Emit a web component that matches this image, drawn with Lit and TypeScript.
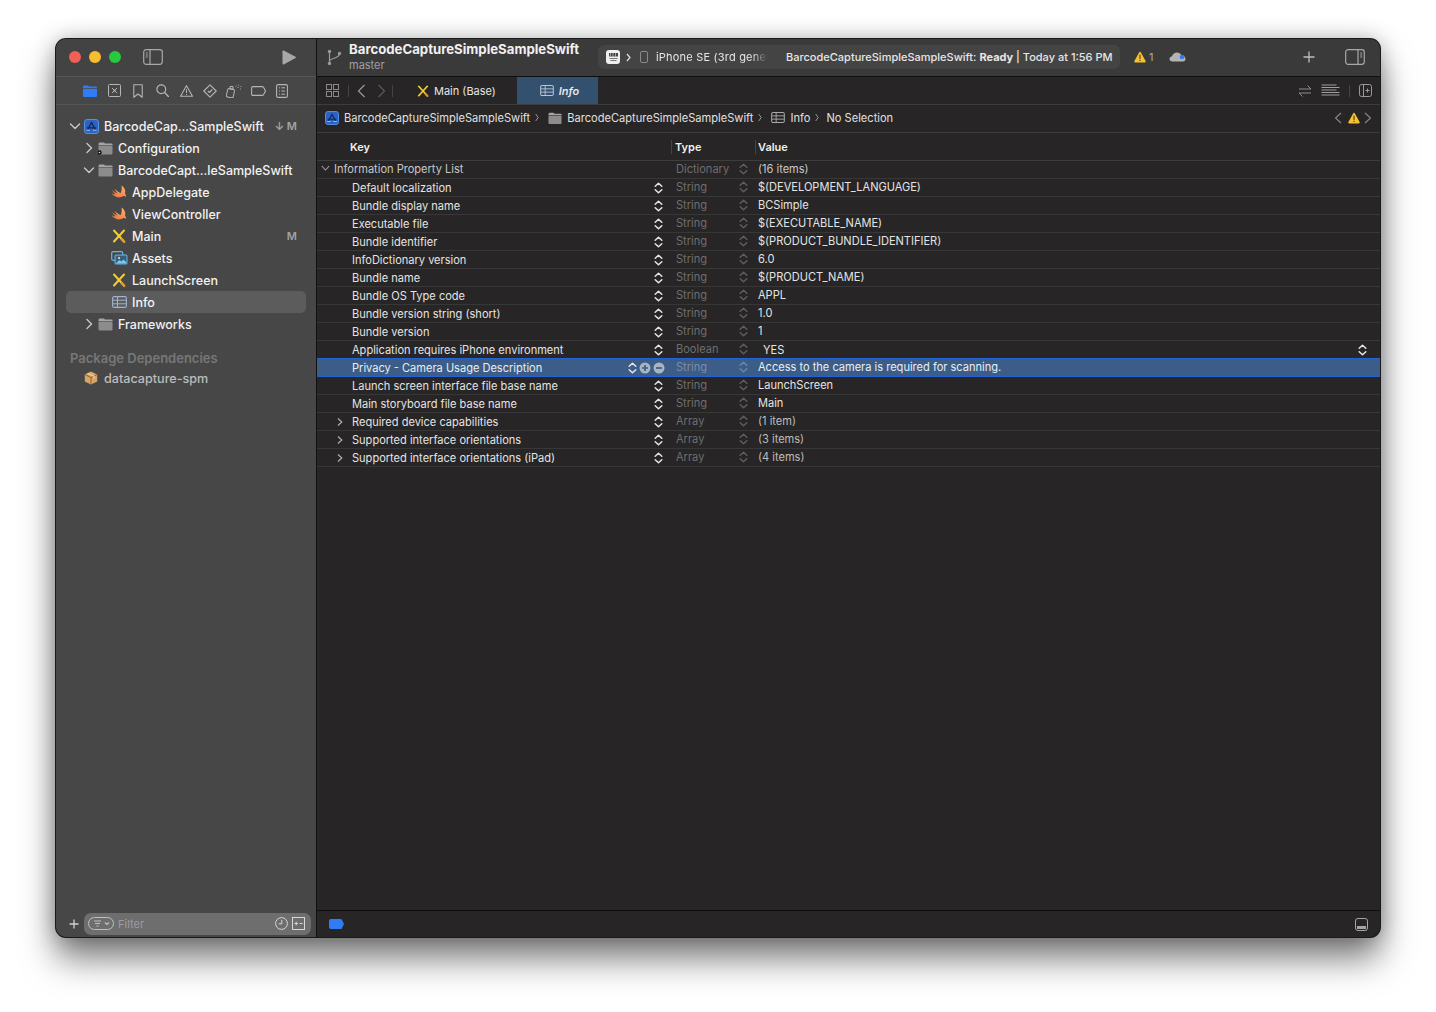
import { LitElement, html, css, svg } from "lit";
import { customElement } from "lit/decorators.js";

const ic = (w: number, h: number, body: unknown, cls = "") =>
  html`<svg class="ic ${cls}" width=${w} height=${h} viewBox="0 0 ${w} ${h}" fill="none">${body}</svg>`;

const chevR = (c = "#c8c8c8") => ic(8, 12, svg`<path d="M2 1.500 6.500 6 2 10.500" stroke=${c} stroke-width="1.400" stroke-linecap="round" stroke-linejoin="round"/>`);
const chevD = (c = "#c8c8c8") => ic(12, 8, svg`<path d="M1.500 2 6 6.500 10.500 2" stroke=${c} stroke-width="1.400" stroke-linecap="round" stroke-linejoin="round"/>`);

const folder = (badge = false, w = 15) => html`<svg class="ic" width=${w} height="14" viewBox="0 0 15 14" fill="none">
  <path d="M.5 3.500C.5 2 1 1.500 2.200 1.500h3.200c.8 0 1 .3 1.500 1h6.400c1 0 1.400.5 1.400 1.400V4H.5z" fill="#a5a5a5"/>
  <path d="M.5 4.500h14v7.500c0 1-.5 1.500-1.500 1.500H2c-1 0-1.500-.5-1.500-1.500z" fill="#8c8c8c"/>
  ${badge ? svg`<circle cx="1.500" cy="11.500" r="2.200" fill="#111"/><circle cx="1.500" cy="11.500" r=".8" fill="#ddd"/>` : ""}
</svg>`;

const project = (s = 15) => html`<svg class="ic" width=${s} height=${s} viewBox="0 0 16 16" fill="none">
  <rect x=".6" y=".6" width="14.800" height="14.800" rx="2.600" fill="#2b62c4" stroke="#5b97ef"/>
  <path d="M8 3.600 4.200 11M8 3.600 11.800 11M3.600 9.400h8.800" stroke="#12294f" stroke-width="1.300" stroke-linecap="round"/>
  <path d="M3 12h3M10 12h3" stroke="#9cc3f7" stroke-width="1.100" stroke-linecap="round"/>
</svg>`;

const swift = () => html`<svg class="ic" width="16" height="14" viewBox="0 0 16 14">
  <defs><linearGradient id="sw" x1="0.7" y1="0" x2="0.3" y2="1"><stop offset="0" stop-color="#fbb26a"/><stop offset="1" stop-color="#f27a42"/></linearGradient></defs>
  <path fill="url(#sw)" d="M10.500 .5C13.500 2.500 15 5.500 14 8.500C14.800 9.600 15.200 10.800 15 12.200C14.200 11 13 10.700 12 11.300C10.300 12.400 7.800 12.800 5.500 12C3.500 11.300 1.800 10 .6 8.300C2 9.100 3.400 9.500 4.900 9.500C3.400 8.400 2 6.900 1 5C2.800 6.600 4.800 7.900 6.600 8.700C5.400 7.300 4.200 5.600 3.400 3.800C5.300 5.600 7.500 7.200 9.600 8.200C10.700 5.800 11.100 3 10.500 .5z"/>
</svg>`;

const xib = (s = 14) => html`<svg class="ic" width=${s} height=${s} viewBox="0 0 14 14" fill="none">
  <path d="M2 1.500 12 12.500" stroke="#f4cf2e" stroke-width="2" stroke-linecap="round"/>
  <path d="M12 1.500 2 12.500" stroke="#f4cf2e" stroke-width="2" stroke-linecap="round"/>
  <path d="M9.500 10 12.300 13" stroke="#e9962f" stroke-width="2.200" stroke-linecap="round"/>
</svg>`;

const plist = (c = "#9fb4c9", w = 15, h = 12) => html`<svg class="ic" width=${w} height=${h} viewBox="0 0 15 12" fill="none">
  <rect x=".6" y=".6" width="13.800" height="10.800" rx="1.500" stroke=${c} stroke-width="1.100"/>
  <path d="M.6 4.200h13.800M.6 7.800h13.800M5.500 .6v10.800" stroke=${c} stroke-width="1"/>
</svg>`;

const assets = () => ic(17, 14, svg`
  <rect x=".7" y=".7" width="11" height="8.600" rx="1.500" stroke="#66b6ea" stroke-width="1.200"/>
  <rect x="3.500" y="3.500" width="13" height="10" rx="1.500" fill="#5fb0e6"/>
  <rect x="4.600" y="4.600" width="10.800" height="7.800" fill="#3c5d74"/>
  <path d="M4.600 12.400 8.500 9l2 1.500 2-2 2.900 3v.9z" fill="#78c8f4"/>
  <circle cx="8" cy="7" r="1" fill="#d8eeff"/>
`);

const box = () => ic(14, 14, svg`
  <path d="M7 .5 13.200 3.500v7L7 13.500.8 10.500v-7z" fill="#d9a566"/>
  <path d="M.8 3.500 7 6.500l6.200-3M7 6.500v7" stroke="#8f6537" stroke-width="1"/>
  <path d="M3.600 2.200 10 5.200v2" stroke="#f0d0a4" stroke-width="1.200"/>
`);

const warn = (s = 12) => html`<svg class="ic" width=${s} height=${s} viewBox="0 0 12 12">
  <path d="M6 .8c.4 0 .7.2.9.6l4.700 8.700c.3.600-.1 1.300-.8 1.300H1.200c-.7 0-1.100-.7-.8-1.300L5.100 1.400c.2-.4.5-.6.9-.6z" fill="#f7c033"/>
  <rect x="5.400" y="3.600" width="1.200" height="4.400" fill="#5e4a12"/>
  <rect x="5.400" y="8.800" width="1.200" height="1.200" fill="#5e4a12"/>
</svg>`;

const stepper = (c = "#e6e6e6") => html`<svg class="ic" width="9" height="12" viewBox="0 0 9 12" fill="none">
  <path d="M1.200 4.300 4.500 1.200 7.800 4.300M1.200 7.700 4.500 10.800 7.800 7.700" stroke=${c} stroke-width="1.500" stroke-linecap="round" stroke-linejoin="round"/>
</svg>`;

const S = "#b5b5b5";
const navIcons = [
  html`<svg class="ic" width="14" height="12" viewBox="0 0 14 12"><path d="M0 2c0-1 .5-1.500 1.500-1.500h3c.8 0 1 .4 1.400 1h6.600c1 0 1.500.5 1.500 1.500H0z" fill="#2f7cf6"/><path d="M0 3.800h14v6.700c0 1-.5 1.500-1.500 1.500h-11c-1 0-1.500-.5-1.500-1.500z" fill="#2f7cf6"/></svg>`,
  ic(13, 13, svg`<rect x=".5" y=".5" width="12" height="12" rx="1" stroke=${S}/><path d="M4 4l5 5M9 4l-5 5" stroke=${S}/><circle cx="6.500" cy="6.500" r="1" fill=${S}/>`),
  ic(10, 14, svg`<path d="M.8 .7h8.400v12.600L5 10 .8 13.300z" stroke=${S} stroke-width="1.100" stroke-linejoin="round"/>`),
  ic(13, 13, svg`<circle cx="5.300" cy="5.300" r="4.400" stroke=${S} stroke-width="1.200"/><path d="M8.600 8.600 12.400 12.400" stroke=${S} stroke-width="1.400" stroke-linecap="round"/>`),
  ic(13, 12, svg`<path d="M6.500 .8 12.500 11.300H.5z" stroke=${S} stroke-width="1.100" stroke-linejoin="round"/><path d="M6.500 4.300V8M6.500 9v1" stroke=${S}/>`),
  ic(14, 14, svg`<path d="M7 .8 13.200 7 7 13.200.8 7z" stroke=${S} stroke-width="1.100" stroke-linejoin="round"/><path d="M4.800 7 6.500 8.500 9.300 5.500" stroke=${S} stroke-width="1.100"/>`),
  ic(16, 14, svg`<rect x="1" y="5" width="7" height="8.500" rx="1.500" stroke=${S} transform="rotate(12 4.500 9)"/><path d="M4 2.500h3v2.500H4z" stroke=${S}/><circle cx="10" cy="2" r=".6" fill=${S}/><circle cx="12.500" cy="1" r=".6" fill=${S}/><circle cx="12" cy="3.500" r=".6" fill=${S}/><circle cx="15" cy="2.500" r=".6" fill=${S}/><circle cx="14.500" cy="5" r=".6" fill=${S}/>`),
  ic(15, 10, svg`<path d="M2 .6h9.300c.5 0 .8.200 1.100.5L14.500 5l-2.100 3.900c-.3.300-.6.500-1.100.5H2c-.8 0-1.400-.6-1.400-1.400V2C.6 1.200 1.200.6 2 .6z" stroke=${S} stroke-width="1.100"/>`),
  ic(12, 14, svg`<rect x=".6" y=".6" width="10.800" height="12.800" rx="1.500" stroke=${S} stroke-width="1.100"/><path d="M3 3.800h1M5.300 3.800H9M3 7h1M5.300 7H9M3 10.200h1M5.300 10.200H9" stroke=${S}/>`),
];

type Tree = { indent: number; tog?: "r" | "d"; icon: unknown; label: string; status?: string; sel?: boolean };
const tree: Tree[] = [
  { indent: 14, tog: "d", icon: project(), label: "BarcodeCap...SampleSwift", status: "↓ M" },
  { indent: 28, tog: "r", icon: folder(true), label: "Configuration" },
  { indent: 28, tog: "d", icon: folder(), label: "BarcodeCapt...leSampleSwift" },
  { indent: 42, icon: swift(), label: "AppDelegate" },
  { indent: 42, icon: swift(), label: "ViewController" },
  { indent: 42, icon: xib(), label: "Main", status: "M" },
  { indent: 42, icon: assets(), label: "Assets" },
  { indent: 42, icon: xib(), label: "LaunchScreen" },
  { indent: 42, icon: plist(), label: "Info", sel: true },
  { indent: 28, tog: "r", icon: folder(), label: "Frameworks" },
];

type Row = { k: string; t: string; v: string; tog?: boolean; sel?: boolean; yes?: boolean };
const rows: Row[] = [
  { k: "Default localization", t: "String", v: "$(DEVELOPMENT_LANGUAGE)" },
  { k: "Bundle display name", t: "String", v: "BCSimple" },
  { k: "Executable file", t: "String", v: "$(EXECUTABLE_NAME)" },
  { k: "Bundle identifier", t: "String", v: "$(PRODUCT_BUNDLE_IDENTIFIER)" },
  { k: "InfoDictionary version", t: "String", v: "6.0" },
  { k: "Bundle name", t: "String", v: "$(PRODUCT_NAME)" },
  { k: "Bundle OS Type code", t: "String", v: "APPL" },
  { k: "Bundle version string (short)", t: "String", v: "1.0" },
  { k: "Bundle version", t: "String", v: "1" },
  { k: "Application requires iPhone environment", t: "Boolean", v: "YES", yes: true },
  { k: "Privacy - Camera Usage Description", t: "String", v: "Access to the camera is required for scanning.", sel: true },
  { k: "Launch screen interface file base name", t: "String", v: "LaunchScreen" },
  { k: "Main storyboard file base name", t: "String", v: "Main" },
  { k: "Required device capabilities", t: "Array", v: "(1 item)", tog: true },
  { k: "Supported interface orientations", t: "Array", v: "(3 items)", tog: true },
  { k: "Supported interface orientations (iPad)", t: "Array", v: "(4 items)", tog: true },
];

const roundBtn = (minus: boolean) => html`<svg class="ic" width="12" height="12" viewBox="0 0 12 12">
  <circle cx="6" cy="6" r="5.500" fill="#a9b4c2"/>
  <path d=${minus ? "M3 6h6" : "M3 6h6M6 3v6"} stroke="#3b5d87" stroke-width="1.700"/>
</svg>`;

const gtIcon = () => ic(4, 9, svg`<path d="M.7 1l2.500 3.500L.7 8" stroke="#9a9a9a"/>`);

@customElement("app-root")
export class AppRoot extends LitElement {
  static styles = css`
    :host { display: block; box-sizing: border-box; width: 1436px; height: 1012px; padding: 39px 56px 75px; background: #fff; font-family: Inter, "Liberation Sans", sans-serif; overflow: hidden; }
    * { box-sizing: border-box; }
    .ic { display: block; flex: none; }
    .window { position: relative; display: flex; width: 1324px; height: 898px; border-radius: 10px; background: #272525; box-shadow: 0 0 0 1px #1a1a1a, 0 22px 34px rgba(0,0,0,.5), 0 0 22px rgba(0,0,0,.28); overflow: hidden; color: #e6e6e6; }
    .side { width: 261px; flex: none; display: flex; flex-direction: column; background: #474747; border-right: 1px solid #111; }
    .side-title { height: 38px; flex: none; display: flex; align-items: center; padding: 0 20px 1px 13px; background: #434343; border-bottom: 1px solid #555; }
    .light { width: 12px; height: 12px; border-radius: 50%; margin-right: 8px; }
    .r { background: #f15f57; } .y { background: #f8bd2f; } .g { background: #27c93f; }
    .side-toggle { margin-left: 14px; }
    .play { margin-left: auto; }
    .nav { height: 28px; flex: none; display: flex; align-items: center; gap: 10px; padding: 0 0 0 27px; border-bottom: 1px solid #555; }
    .nav > * { width: 14px; display: flex; justify-content: center; }
    .tree { flex: 1; padding-top: 10px; font-size: 12.5px; font-weight: 500; color: #f2f2f2; }
    .node { position: relative; height: 22px; display: flex; align-items: center; margin: 0 10px; border-radius: 5px; }
    .node.sel { background: #5c5c5c; }
    .tog { width: 14px; flex: none; display: flex; justify-content: center; margin-left: -3px; }
    .nicon { width: 18px; flex: none; display: flex; justify-content: center; margin-right: 4px; }
    .label { white-space: nowrap; }
    .status { margin-left: auto; padding-right: 9px; font-size: 11px; font-weight: 600; color: #a3a3a3; }
    .group { margin: 13px 0 0 14px; height: 20px; line-height: 20px; font-size: 13px; font-weight: 600; color: #777; }
    .dep { height: 20px; display: flex; align-items: center; gap: 6px; padding-left: 28px; font-size: 12.6px; color: #bdbdbd; }
    .filter-bar { height: 28px; flex: none; display: flex; align-items: center; padding: 1px 5px 0 13px; gap: 5px; }
    .field { flex: 1; height: 22px; display: flex; align-items: center; gap: 4px; padding: 0 6px 0 4px; background: #6e6e6e; border-radius: 7px; font-size: 11px; color: #9d9d9d; }
    .field .end { margin-left: auto; display: flex; gap: 4px; align-items: center; }
    .main { flex: 1; min-width: 0; display: flex; flex-direction: column; }
    .title { height: 38px; flex: none; display: flex; align-items: center; background: #3b3a3a; border-bottom: 1px solid #0e0e0e; padding: 0 15px 1px 10px; }
    .branch { margin-right: 7px; }
    .proj { width: 249px; flex: none; line-height: 1; }
    .proj b { display: block; font-size: 13.2px; font-weight: 700; color: #f0f0f0; white-space: nowrap; }
    .proj span { display: block; font-size: 11px; color: #a0a0a0; margin-top: 3px; }
    .activity { width: 522px; height: 24px; flex: none; display: flex; align-items: center; background: #454444; border-radius: 6px; padding-left: 8px; font-size: 11px; color: #e6e6e6; }
    .scheme { width: 14px; height: 14px; border-radius: 3px; background: #efefef; display: flex; align-items: center; justify-content: center; margin-right: 6px; }
    .device { margin: 0 8px 0 9px; }
    .dev-name { width: 114px; letter-spacing: .2px; white-space: nowrap; -webkit-mask-image: linear-gradient(90deg, #000 84%, transparent 98%); mask-image: linear-gradient(90deg, #000 84%, transparent 98%); }
    .status-text { margin-left: 16px; white-space: nowrap; font-weight: 500; }
    .status-text b { font-weight: 700; }
    .warnc { display: flex; align-items: center; gap: 3px; margin-left: 14px; font-size: 11px; color: #aaa; }
    .cloud { margin-left: 16px; }
    .title .add { margin-left: auto; margin-right: 30px; }
    .tabs { height: 28px; flex: none; display: flex; align-items: stretch; border-bottom: 1px solid #3e3d3d; padding-left: 9px; font-size: 11px; }
    .tabs .left { display: flex; align-items: center; width: 191px; flex: none; }
    .tabs .sep { width: 1px; height: 12px; background: #444; }
    .sep-a { margin: 0 8px 0 9px; }
    .sep-b { margin-left: 6px; }
    .gap-nav { width: 11px; }
    .gap-tab { width: 24px; flex: none; }
    .sep-c { margin: 0 1px; }
    .open-tab { display: flex; align-items: center; gap: 5px; white-space: nowrap; }
    .tab-active { width: 81px; flex: none; display: flex; align-items: center; justify-content: center; gap: 5px; padding-left: 4px; background: #34506f; font-style: italic; font-weight: 600; color: #e8e8e8; }
    .tabs .right { margin-left: auto; display: flex; align-items: center; gap: 8px; padding-right: 8px; }
    .swap { margin-right: 1px; }
    .crumbs { height: 28px; flex: none; display: flex; align-items: center; border-bottom: 1px solid #3e3d3d; padding: 0 8px 2px 8px; font-size: 11.1px; color: #e0e0e0; white-space: nowrap; }
    .crumbs .ic { margin-right: 5px; }
    .crumbs .gt { margin: 0 4px 0 5px; }
    .crumbs .gt.last { margin-right: 2px; }
    .crumbs .issues { margin-left: auto; display: flex; align-items: center; }
    .crumbs .issues .ic { margin: 0; }
    .crumbs .issues .w { margin: 0 4px 0 6px; }
    .thead, .row { display: grid; grid-template-columns: 355px 84px 1fr; }
    .thead { height: 28px; flex: none; align-items: center; border-bottom: 1px solid #3e3d3d; font-size: 11px; font-weight: 600; color: #efefef; }
    .thead > div { height: 14px; line-height: 14px; }
    .thead .k { padding-left: 33px; border-right: 1px solid #444; }
    .thead .t { padding-left: 3px; border-right: 1px solid #444; }
    .thead .v { padding-left: 2px; }
    .row { height: 18px; align-items: center; border-bottom: 1px solid #383737; font-size: 11.05px; color: #e4e4e4; }
    .row .k { display: flex; align-items: center; padding: 0 9px 0 35px; position: relative; white-space: nowrap; }
    .row .k .tw { position: absolute; left: 20px; top: -1px; }
    .row.top .k { padding: 0 9px 2px 17px; }
    .row.top .k .tw { left: 4px; top: 3px; }
    .row .k .ctl { margin-left: auto; display: flex; align-items: center; gap: 2px; }
    .row .k .ctl.wide { margin-right: -2px; }
    .row .t { display: flex; align-items: center; justify-content: space-between; padding: 0 8px 2px 4px; color: #6f6f6f; }
    .row .v { padding-left: 2px; margin-top: -2px; display: flex; align-items: center; justify-content: space-between; padding-right: 13px; }
    .row .v.yes { padding-left: 7px; margin-top: 0; }
    .row.sel { position: relative; background: #3b5d87; box-shadow: 0 -1px 0 #2463d6, inset 0 -1px 0 #2463d6; border-bottom: 0; color: #e8eef5; }
    .row.sel .t { color: #7c8ea3; }
    .row.top .k, .row.top .v { color: #c8c8c8; }
    .row.dim .v { color: #bdbdbd; }
    .fill { flex: 1; }
    .bottom { height: 27px; flex: none; display: flex; align-items: center; justify-content: space-between; border-top: 1px solid #0e0e0e; padding: 0 12px; }
  `;

  render() {
    const gray = "#9a9a9a";
    const upDown = stepper("#5e5e5e");
    return html`<div class="window">
      <div class="side">
        <div class="side-title">
          <span class="light r"></span><span class="light y"></span><span class="light g"></span>
          <span class="side-toggle">${ic(20, 16, svg`<rect x=".7" y=".7" width="18.600" height="14.600" rx="2.500" stroke="#a8a8a8" stroke-width="1.200"/><path d="M7 .7v14.600" stroke="#a8a8a8" stroke-width="1.200"/><path d="M2.800 4h2M2.800 6h2M2.800 8h2" stroke="#a8a8a8"/>`)}</span>
          <span class="play">${ic(14, 15, svg`<path d="M.5 1.200c0-.6.600-1 1.200-.7l11.800 6.300c.5.300.5 1 0 1.300L1.700 14.500c-.6.300-1.200-.1-1.200-.7z" fill="#a8a8a8"/>`)}</span>
        </div>
        <div class="nav">${navIcons.map((i) => html`<span>${i}</span>`)}</div>
        <div class="tree">
          ${tree.map((n) => html`<div class="node ${n.sel ? "sel" : ""}">
            <span style="width:${n.indent - 9}px;flex:none"></span>
            <span class="tog">${n.tog === "r" ? chevR() : n.tog === "d" ? chevD() : ""}</span>
            <span class="nicon">${n.icon}</span>
            <span class="label">${n.label}</span>
            ${n.status ? html`<span class="status">${n.status}</span>` : ""}
          </div>`)}
          <div class="group">Package Dependencies</div>
          <div class="dep">${box()}<span>datacapture-spm</span></div>
        </div>
        <div class="filter-bar">
          ${ic(10, 10, svg`<path d="M5 .5v9M.5 5h9" stroke="#d0d0d0" stroke-width="1.300"/>`)}
          <div class="field">
            ${ic(26, 13, svg`<rect x=".5" y=".5" width="25" height="12" rx="6" stroke="#c0c0c0"/><path d="M6 4h7M7 6.500h5M8.500 9h2" stroke="#c0c0c0"/><path d="M17 5.500l2 2 2-2" stroke="#c0c0c0" stroke-width="1.200"/>`)}
            <span>Filter</span>
            <span class="end">
              ${ic(13, 13, svg`<circle cx="6.500" cy="6.500" r="5.900" stroke="#d8d8d8"/><path d="M6.800 3v3.800H3.800" stroke="#d8d8d8"/>`)}
              ${ic(13, 13, svg`<rect x=".5" y=".5" width="12" height="12" stroke="#d8d8d8"/><path d="M2.500 6.500h3.500M4.200 4.700v3.600M7.700 6.500h3" stroke="#d8d8d8"/>`)}
            </span>
          </div>
        </div>
      </div>
      <div class="main">
        <div class="title">
          <span class="branch">${ic(15, 17, svg`<circle cx="2.500" cy="2.500" r="1.700" fill=${gray}/><circle cx="2.500" cy="14.500" r="1.700" fill=${gray}/><circle cx="12.500" cy="4.500" r="1.700" fill=${gray}/><path d="M2.500 3v11M2.500 12c0-3 10-2 10-7.500" stroke=${gray} stroke-width="1.200"/>`)}</span>
          <div class="proj"><b>BarcodeCaptureSimpleSampleSwift</b><span>master</span></div>
          <div class="activity">
            <span class="scheme">${ic(11, 11, svg`<rect x="1" y="1" width="9" height="3.500" fill="#444"/><path d="M2.500 1v3.500M5 1v3.500M7.500 1v3.500" stroke="#ddd" stroke-width=".6"/><path d="M1.500 6.500h8M2.500 8.500h6" stroke="#777" stroke-width="1.200"/>`)}</span>
            ${ic(5, 9, svg`<path d="M1 1l3 3.500L1 8" stroke="#e0e0e0" stroke-width="1.200"/>`)}
            <span class="device">${ic(8, 12, svg`<rect x=".5" y=".5" width="7" height="11" rx="1.400" stroke="#8a8a8a"/>`)}</span>
            <span class="dev-name">iPhone SE (3rd gener</span>
            <span class="status-text">BarcodeCaptureSimpleSampleSwift: <b>Ready</b> | Today at 1:56 PM</span>
          </div>
          <span class="warnc">${warn()}1</span>
          <span class="cloud">${ic(17, 10, svg`<path d="M3.500 9.500C1.500 9.500.5 8.300.5 7c0-1.400 1-2.300 2.300-2.400C3.500 2.300 5.500.5 8 .5c2 0 3.500 1 4.300 2.600 2.200 0 4.200 1.800 4.200 4 0 1.500-1 2.400-2.500 2.400z" fill="#b4b4b4"/><circle cx="13" cy="5" r="2.300" fill="#2f7cf6"/>`)}</span>
          <span class="add">${ic(12, 12, svg`<path d="M6 .5v11M.5 6h11" stroke="#bdbdbd" stroke-width="1.300"/>`)}</span>
          ${ic(20, 16, svg`<rect x=".7" y=".7" width="18.600" height="14.600" rx="2.500" stroke="#a8a8a8" stroke-width="1.200"/><path d="M13 .7v14.600" stroke="#a8a8a8" stroke-width="1.200"/><path d="M15.200 4h2M15.200 6h2M15.200 8h2" stroke="#a8a8a8"/>`)}
        </div>
        <div class="tabs">
          <div class="left">
            ${ic(13, 13, svg`<rect x=".5" y=".5" width="5" height="5" stroke="#8a8a8a"/><rect x="7.500" y=".5" width="5" height="5" stroke="#8a8a8a"/><rect x=".5" y="7.500" width="5" height="5" stroke="#8a8a8a"/><rect x="7.500" y="7.500" width="5" height="5" stroke="#8a8a8a"/>`)}
            <span class="sep sep-a"></span>
            ${ic(9, 14, svg`<path d="M7.500 1 1.500 7l6 6" stroke="#9a9a9a" stroke-width="1.200"/>`)}
            <span class="gap-nav"></span>
            ${ic(9, 14, svg`<path d="M1.500 1l6 6-6 6" stroke="#5a5a5a" stroke-width="1.200"/>`)}
            <span class="sep sep-b"></span>
            <span class="gap-tab"></span>
            <span class="open-tab">${xib(12)}<span>Main (Base)</span></span>
          </div>
          <div class="tab-active">${plist("#b9c6d4", 14, 11)}<span>Info</span></div>
          <div class="right">
            <span class="swap">${ic(14, 14, svg`<path d="M1 5h12L9.500 1.500M13 9H1l3.500 3.500" stroke="#8e8e8e"/>`)}</span>
            ${ic(19, 13, svg`<path d="M.5 1h15M.5 3.500h18M.5 6h15M.5 8.500h18M.5 11h18" stroke="#a0a0a0"/>`)}
            <span class="sep sep-c"></span>
            ${ic(13, 13, svg`<rect x=".5" y=".5" width="12" height="12" rx="2" stroke="#9a9a9a"/><path d="M4.500 .5v12M6.500 6.500h4M8.500 4.500v4" stroke="#9a9a9a"/>`)}
          </div>
        </div>
        <div class="crumbs">
          ${project(14)}<span>BarcodeCaptureSimpleSampleSwift</span>
          <span class="gt">${gtIcon()}</span>
          ${folder(false, 14)}<span>BarcodeCaptureSimpleSampleSwift</span>
          <span class="gt">${gtIcon()}</span>
          ${plist("#a9a9a9", 14, 11)}<span>Info</span>
          <span class="gt last">${gtIcon()}</span>
          <span>No Selection</span>
          <span class="issues">
            ${ic(8, 12, svg`<path d="M7 1 1.500 6 7 11" stroke="#8a8a8a" stroke-width="1.100"/>`)}
            <span class="w">${warn(12)}</span>
            ${ic(8, 12, svg`<path d="M1 1l5.500 5L1 11" stroke="#8a8a8a" stroke-width="1.100"/>`)}
          </span>
        </div>
        <div class="thead"><div class="k">Key</div><div class="t">Type</div><div class="v">Value</div></div>
        <div class="row top">
          <div class="k"><span class="tw">${ic(9, 6, svg`<path d="M.8 1 4.500 5 8.200 1" stroke="#a0a0a0" stroke-width="1.100"/>`)}</span>Information Property List</div>
          <div class="t"><span>Dictionary</span>${upDown}</div>
          <div class="v">(16 items)</div>
        </div>
        ${rows.map((r) => html`<div class="row ${r.sel ? "sel" : ""} ${r.tog ? "dim" : ""}">
          <div class="k">
            ${r.tog ? html`<span class="tw">${ic(6, 16, svg`<path d="M1 4.500 4.800 8 1 11.500" stroke="#b5b5b5" stroke-width="1.100"/>`)}</span>` : ""}
            <span>${r.k}</span>
            ${r.sel
              ? html`<span class="ctl wide">${stepper()}${roundBtn(false)}${roundBtn(true)}</span>`
              : html`<span class="ctl">${stepper()}</span>`}
          </div>
          <div class="t"><span>${r.t}</span>${r.sel ? stepper("#6d86a5") : upDown}</div>
          <div class="v ${r.yes ? "yes" : ""}"><span>${r.v}</span>${r.yes ? stepper() : ""}</div>
        </div>`)}
        <div class="fill"></div>
        <div class="bottom">
          ${ic(15, 10, svg`<path d="M2 0h9.500c.6 0 1 .2 1.300.6L15 5l-2.200 4.400c-.3.400-.7.600-1.300.600H2C.8 10 0 9.200 0 8V2C0 .8.800 0 2 0z" fill="#2f7cf6"/>`)}
          ${ic(13, 13, svg`<rect x=".5" y=".5" width="12" height="12" rx="2.500" stroke="#a5a5a5"/><rect x="2" y="8" width="9" height="3" fill="#a5a5a5"/>`)}
        </div>
      </div>
    </div>`;
  }
}
